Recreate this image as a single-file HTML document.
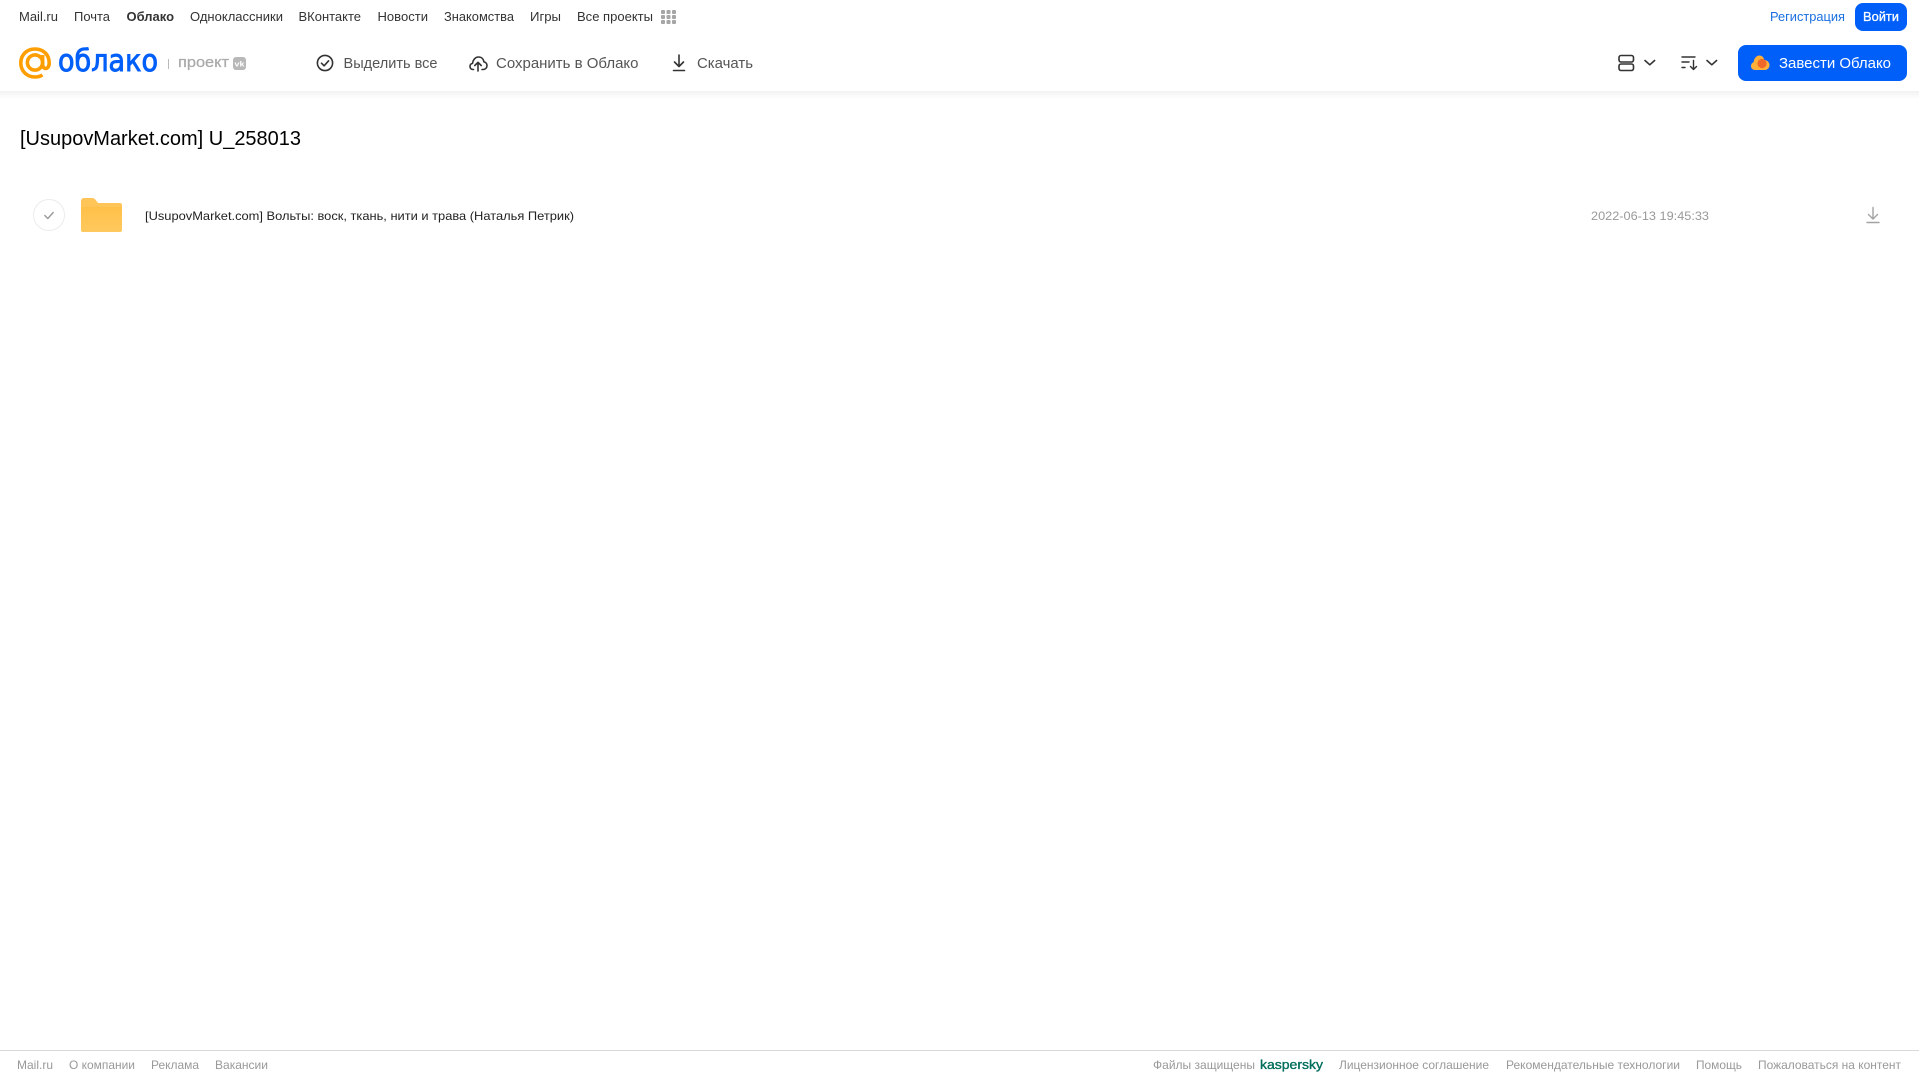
<!DOCTYPE html>
<html lang="ru">
<head>
<meta charset="utf-8">
<title>[UsupovMarket.com] U_258013</title>
<style>
html,body{margin:0;padding:0;background:#fff;width:1919px;height:1079px;overflow:hidden}
svg{display:block;position:absolute;left:0;top:0}
text{font-family:"Liberation Sans",sans-serif}
.n{font-size:13px;fill:#333}
.t{font-size:15px;fill:#555}
.f{font-size:12px;fill:#999}
</style>
</head>
<body>
<svg width="1919" height="1079" viewBox="0 0 1919 1079" xmlns="http://www.w3.org/2000/svg">
<defs>
<linearGradient id="sh" x1="0" y1="0" x2="0" y2="1"><stop offset="0" stop-color="#f2f2f2"/><stop offset="1" stop-color="#fff"/></linearGradient>
<linearGradient id="fo" x1="0" y1="0" x2="0" y2="1"><stop offset="0" stop-color="#ffc048"/><stop offset="1" stop-color="#ffc95f"/></linearGradient>
</defs>
<rect width="1919" height="1079" fill="#fff"/>
<rect x="0" y="91" width="1919" height="8" fill="url(#sh)"/>

<!-- top nav -->
<text class="n" x="19" y="21" textLength="39" lengthAdjust="spacingAndGlyphs">Mail.ru</text>
<text class="n" x="74" y="21" textLength="36" lengthAdjust="spacingAndGlyphs">Почта</text>
<text class="n" x="126.500" y="21" textLength="47.500" lengthAdjust="spacingAndGlyphs" font-weight="700">Облако</text>
<text class="n" x="190" y="21" textLength="93" lengthAdjust="spacingAndGlyphs">Одноклассники</text>
<text class="n" x="298.500" y="21" textLength="62.500" lengthAdjust="spacingAndGlyphs">ВКонтакте</text>
<text class="n" x="377.500" y="21" textLength="50.500" lengthAdjust="spacingAndGlyphs">Новости</text>
<text class="n" x="444" y="21" textLength="70" lengthAdjust="spacingAndGlyphs">Знакомства</text>
<text class="n" x="530" y="21" textLength="31" lengthAdjust="spacingAndGlyphs">Игры</text>
<text class="n" x="577" y="21" textLength="76" lengthAdjust="spacingAndGlyphs">Все проекты</text>
<g fill="#a6a6a6">
<rect x="661" y="10" width="4" height="4" rx="1"/><rect x="666.500" y="10" width="4" height="4" rx="1"/><rect x="672" y="10" width="4" height="4" rx="1"/>
<rect x="661" y="15" width="4" height="4" rx="1"/><rect x="666.500" y="15" width="4" height="4" rx="1"/><rect x="672" y="15" width="4" height="4" rx="1"/>
<rect x="661" y="20" width="4" height="4" rx="1"/><rect x="666.500" y="20" width="4" height="4" rx="1"/><rect x="672" y="20" width="4" height="4" rx="1"/>
</g>

<text x="1770" y="21" textLength="75" lengthAdjust="spacingAndGlyphs" font-size="13" fill="#1a6fe0">Регистрация</text>
<rect x="1855" y="3" width="52" height="28" rx="8" fill="#005ff9"/>
<text x="1863" y="21" textLength="36" lengthAdjust="spacingAndGlyphs" font-size="13" fill="#fff" stroke="#fff" stroke-width=".3">Войти</text>

<!-- logo -->
<g fill="none" stroke="#ff9e00" stroke-width="3.600">
<circle cx="35" cy="62.500" r="7.600"/>
<path d="M42.600 55v9.500c0 5.500 6.600 5.500 6.600-1.500 0-8.500-6-14-14.200-14C26.600 49 20.800 55 20.800 63c0 8 6 14 14.200 14 3 0 5.200-.6 7.500-2"/>
</g>
<text x="58" y="71" textLength="100" lengthAdjust="spacingAndGlyphs" font-size="30" fill="#005ff9" stroke="#005ff9" stroke-width=".9" style="font-family:'DejaVu Sans',sans-serif">облако</text>
<rect x="168" y="59" width="1" height="10" fill="#bbb"/>
<text x="178" y="67" textLength="51" lengthAdjust="spacingAndGlyphs" font-size="15" fill="#aaa" stroke="#aaa" stroke-width=".25">проект</text>
<rect x="233" y="57" width="13" height="13" rx="3" fill="#b8b8b8"/>
<text x="234.500" y="66.500" textLength="10" lengthAdjust="spacingAndGlyphs" font-size="7.500" font-weight="700" fill="#fff">vk</text>

<!-- toolbar -->
<g fill="none" stroke="#333" stroke-width="1.600" stroke-linecap="round" stroke-linejoin="round">
<circle cx="325" cy="63" r="7.600"/>
<path d="M321.500 63.200l2.600 2.600 4.500-5"/>
<path d="M473.500 69.500h-.5c-1.900 0-3-1.400-3-3 0-1.600 1-2.800 2.500-3.100.4-3.300 2.700-6.400 6-6.400 3 0 5 2.100 5.400 4.800 1.800.4 3.100 1.900 3.100 3.800 0 2.200-1.700 3.900-3.700 3.900h-1.300"/>
<path d="M478 71v-8.500M474.800 65.500l3.200-3.200 3.200 3.200"/>
<path d="M679 55v11.500M674.500 62l4.500 4.500 4.500-4.500M673.500 70.500h11"/>
</g>
<text class="t" x="343.500" y="68" textLength="94" lengthAdjust="spacingAndGlyphs">Выделить все</text>
<text class="t" x="496" y="68" textLength="142.500" lengthAdjust="spacingAndGlyphs">Сохранить в Облако</text>
<text class="t" x="697" y="68" textLength="56" lengthAdjust="spacingAndGlyphs">Скачать</text>

<!-- view / sort -->
<g fill="none" stroke="#333" stroke-width="1.600" stroke-linecap="round" stroke-linejoin="round">
<rect x="1619" y="55.500" width="14.500" height="6.500" rx="2"/>
<rect x="1619" y="64" width="14.500" height="6.500" rx="2"/>
<path d="M1645 60.500l4.800 4.300 4.800-4.300"/>
<path d="M1707 60.500l4.800 4.300 4.800-4.300"/>
<path d="M1682 57h13M1682 62h7M1682 67.500h3" stroke-width="1.400"/>
<path d="M1693.500 60.500v8.500M1690.500 66.500l3 3 3-3" stroke-width="1.400"/>
</g>

<!-- CTA -->
<rect x="1738" y="45" width="169" height="36" rx="8" fill="#005ff9"/>
<path d="M1755 70c-2.500 0-4-1.900-4-4 0-1.900 1.100-3.300 2.600-3.800.4-3.500 2.600-6.700 5.900-6.700 2.500 0 4.200 1.900 4.900 4.500 2.900.2 5.100 2.400 5.100 5.100 0 2.700-2.100 4.900-4.700 4.900z" fill="#ffb03a"/>
<circle cx="1762" cy="63.500" r="4.600" fill="#f0672a"/>
<text x="1779" y="68" textLength="112" lengthAdjust="spacingAndGlyphs" font-size="15" fill="#fff">Завести Облако</text>

<!-- title -->
<text x="20" y="145" textLength="281" lengthAdjust="spacingAndGlyphs" font-size="20" fill="#000">[UsupovMarket.com] U_258013</text>

<!-- row -->
<circle cx="49" cy="215" r="15.500" fill="#fff" stroke="#ececec" stroke-width="1"/>
<path d="M44.800 215.500l3 3 5.400-6" fill="none" stroke="#999" stroke-width="1.400" stroke-linecap="round" stroke-linejoin="round"/>
<path d="M81 201c0-1.700 1.300-3 3-3h8c1.500 0 2.400.5 3.300 1.500L98 203h22c1.100 0 2 .9 2 2v25c0 1.100-.9 2-2 2H83c-1.100 0-2-.9-2-2z" fill="#ffc558"/>
<path d="M81 209c0-1.100.9-2 2-2h37c1.100 0 2 .9 2 2v21c0 1.100-.9 2-2 2H83c-1.100 0-2-.9-2-2z" fill="url(#fo)"/>
<text x="145" y="220" textLength="429" lengthAdjust="spacingAndGlyphs" font-size="12" fill="#222">[UsupovMarket.com] Вольты: воск, ткань, нити и трава (Наталья Петрик)</text>
<text x="1591" y="220" textLength="118" lengthAdjust="spacingAndGlyphs" font-size="12" fill="#999">2022-06-13 19:45:33</text>
<path d="M1873 207.500v11.500M1868.500 214.500l4.500 4.500 4.500-4.500M1867 222.500h12" fill="none" stroke="#a3a3a3" stroke-width="1.400" stroke-linecap="round" stroke-linejoin="round"/>

<!-- footer -->
<rect x="0" y="1050" width="1919" height="1" fill="#d9d9d9"/>
<text class="f" x="17" y="1069" textLength="36" lengthAdjust="spacingAndGlyphs">Mail.ru</text>
<text class="f" x="69" y="1069" textLength="66" lengthAdjust="spacingAndGlyphs">О компании</text>
<text class="f" x="151" y="1069" textLength="48" lengthAdjust="spacingAndGlyphs">Реклама</text>
<text class="f" x="215" y="1069" textLength="53" lengthAdjust="spacingAndGlyphs">Вакансии</text>
<text class="f" x="1153" y="1069" textLength="102" lengthAdjust="spacingAndGlyphs">Файлы защищены</text>
<text x="1260" y="1069" textLength="63" lengthAdjust="spacingAndGlyphs" font-size="13" fill="#006d5c" stroke="#006d5c" stroke-width=".35">kaspersky</text>
<text class="f" x="1339" y="1069" textLength="150" lengthAdjust="spacingAndGlyphs">Лицензионное соглашение</text>
<text class="f" x="1506" y="1069" textLength="174" lengthAdjust="spacingAndGlyphs">Рекомендательные технологии</text>
<text class="f" x="1696" y="1069" textLength="46" lengthAdjust="spacingAndGlyphs">Помощь</text>
<text class="f" x="1758" y="1069" textLength="143" lengthAdjust="spacingAndGlyphs">Пожаловаться на контент</text>
</svg>
</body>
</html>
